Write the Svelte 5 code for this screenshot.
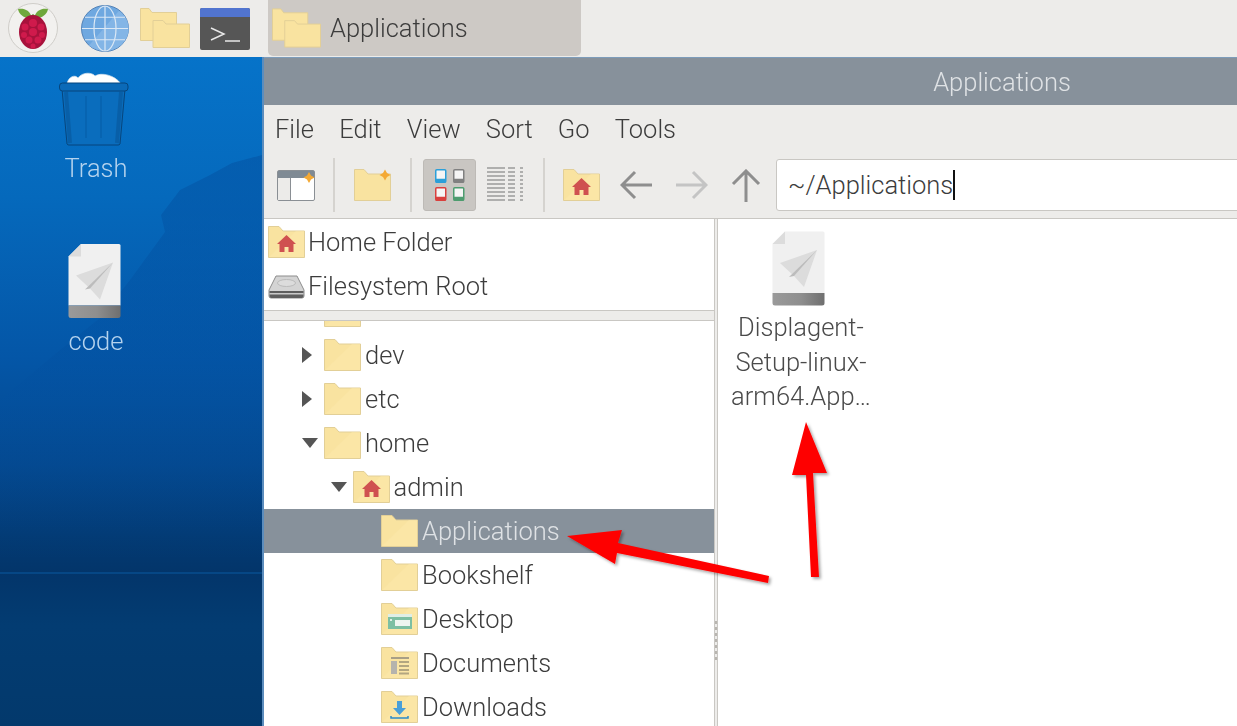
<script>
    const menus = ["File", "Edit", "View", "Sort", "Go", "Tools"];

    const tree = [
        {name: "dev", depth: 0, open: false},
        {name: "etc", depth: 0, open: false},
        {name: "home", depth: 0, open: true},
        {name: "admin", depth: 1, open: true, kind: "home"},
        {name: "Applications", depth: 2, selected: true},
        {name: "Bookshelf", depth: 2},
        {name: "Desktop", depth: 2, kind: "desktop"},
        {name: "Documents", depth: 2, kind: "documents"},
        {name: "Downloads", depth: 2, kind: "downloads"},
    ];

    const tiles = [
        {x: .75, y: .75, color: "#2b9fd9"},
        {x: 18.75, y: .75, color: "#808080"},
        {x: .75, y: 18.75, color: "#d9403e"},
        {x: 18.75, y: 18.75, color: "#4d9c6f"},
    ];
</script>

{#snippet folder(kind)}
    <svg class="folder" width="37" height="32" viewBox="0 0 37 32">
        <path d="M.5 .5H11L15 5H36.5V31.5H.5Z" fill="#f9e3a0" stroke="#e2cf97"/>
        <path d="M1 31L28 5H36V31Z" fill="#fbe7aa" opacity=".6"/>
        {#if kind === "home"}
            <path d="M18.500 9L28 18H25.500V26H20.500V21H16.500V26H11.500V18H9Z" fill="#cf5150"/>
        {:else if kind === "desktop"}
            <rect x="7" y="11" width="24" height="15" fill="#7dbfa3"/>
            <rect x="7" y="11" width="24" height="3" fill="#dfeee6"/>
            <rect x="14" y="17" width="15" height="6" fill="#eef5f0"/>
            <rect x="9" y="16" width="2" height="2" fill="#dfeee6"/>
        {:else if kind === "documents"}
            <rect x="10" y="10" width="18" height="2" fill="#a89f86"/>
            <rect x="10" y="14" width="6" height="13" fill="#b5b3ad"/>
            <path d="M18 15h10M18 19h10M18 23h10M18 26.500h10" stroke="#b3a680" stroke-width="2"/>
        {:else if kind === "downloads"}
            <path d="M16 10h5v7h4l-6.500 7L12 17h4Z" fill="#4a9fd8"/>
            <path d="M10 25v2h17v-2" fill="none" stroke="#2d8bc9" stroke-width="1.500"/>
        {/if}
    </svg>
{/snippet}

{#snippet twoFolders(w, h)}
    <svg width={w} height={h} viewBox="0 0 50 40">
        <path d="M.5 .5H9L12 4.500H36.500V32.500H.5Z" fill="#f9e3a0" stroke="#e2cf97"/>
        <path d="M13 12.500H23L26 16H49.500V39.500H13Z" fill="#f9e3a0" stroke="#e2cf97"/>
    </svg>
{/snippet}

{#snippet fileIcon(w, h)}
    <svg width={w} height={h} viewBox="0 0 53 75">
        <defs>
            <linearGradient id="band">
                <stop offset="0" stop-color="#9a9a9a"/>
                <stop offset=".55" stop-color="#8e8e8e"/>
                <stop offset="1" stop-color="#6f6f6f"/>
            </linearGradient>
        </defs>
        <path d="M13 .5H51a1.500 1.500 0 0 1 1.500 1.500V62H.5V13Z" fill="#f0f0f0"/>
        <path d="M13 .5V13H.5Z" fill="#dcdcdc"/>
        <path d="M.5 62H52.500V72a2.500 2.500 0 0 1-2.500 2.500H3A2.500 2.500 0 0 1 .5 72Z" fill="url(#band)"/>
        <path d="M8 32L45 19L32 56L22 45Z" fill="#dcdcdc"/>
        <path d="M45 19L17 46L22 45Z" fill="#bcbcbc"/>
    </svg>
{/snippet}

<div class="screen">
    <header class="panel">
        <svg class="launcher" width="50" height="50" viewBox="0 0 50 50">
            <circle cx="25" cy="25" r="24.500" fill="#f2f1ef" stroke="#cfcdc9"/>
            <path d="M24 15C17 16 11 12 10 6c6-1 12 1 14 9ZM26 15c7 1 13-3 14-9-6-1-12 1-14 9Z" fill="#6fa83c"/>
            <path d="M25 11l-5 4h10Z" fill="#5b8f30"/>
            <ellipse cx="25" cy="29" rx="14" ry="17" fill="#a8123c"/>
            <g fill="#d01a4c">
                <circle cx="25" cy="20" r="4"/><circle cx="17" cy="24" r="3.500"/><circle cx="33" cy="24" r="3.500"/>
                <circle cx="25" cy="29" r="4"/><circle cx="16" cy="32" r="3"/><circle cx="34" cy="32" r="3"/>
                <circle cx="21" cy="37" r="3.500"/><circle cx="30" cy="37" r="3.500"/><circle cx="25" cy="43" r="2.500"/>
            </g>
        </svg>
        <svg class="globe" width="48" height="47" viewBox="0 0 48 50" preserveAspectRatio="none">
            <ellipse cx="24" cy="25" rx="23.500" ry="24.500" fill="#6fa8e0" stroke="#4f7fb5"/>
            <path d="M8 43L38 6A24 24 0 0 1 44 38A24 24 0 0 1 8 43Z" fill="#83b5e6"/>
            <g fill="none" stroke="#dbe8f5" stroke-width="1.200">
                <path d="M24 1V49M1 25H47M4 13H44M4 37H44"/>
                <ellipse cx="24" cy="25" rx="11" ry="24"/>
            </g>
        </svg>
        <span class="launcher-folder">{@render twoFolders(50, 40)}</span>
        <svg class="term" width="50" height="42" viewBox="0 0 50 42">
            <rect width="50" height="42" rx="2" fill="#565656"/>
            <path d="M2 0H48a2 2 0 0 1 2 2V9H0V2A2 2 0 0 1 2 0Z" fill="#5174cf"/>
            <path d="M11 20L24 26L11 32" fill="none" stroke="#e8e8e8" stroke-width="1.500"/>
            <path d="M25 33H40" stroke="#e8e8e8" stroke-width="1.500"/>
        </svg>
        <div class="task">
            {@render twoFolders(49, 40)}
            <span>Applications</span>
        </div>
    </header>

    <div class="below">
        <aside class="desktop">
            <svg class="hills" viewBox="0 57 262 669" preserveAspectRatio="none">
                <defs>
                    <linearGradient id="hill" x1="0" y1="0" x2="0" y2="1">
                        <stop offset="0" stop-color="#0350a0" stop-opacity=".5"/>
                        <stop offset=".5" stop-color="#0350a0" stop-opacity=".35"/>
                        <stop offset="1" stop-color="#0350a0" stop-opacity="0"/>
                    </linearGradient>
                </defs>
                <path d="M262 155L232 163L210 175L180 190L161 215L165 232L130 280L100 318L60 350L0 400V560H262Z" fill="url(#hill)"/>
                <rect x="0" y="572" width="262" height="2" fill="#0a5aa0" opacity=".5"/>
            </svg>
            <div class="shortcut trash">
                <svg width="70" height="74" viewBox="0 0 70 74">
                    <path d="M8 12C9 5 16 2 19 6C23 0 33 0 36 4C42 0 56 3 62 12Z" fill="#fff" stroke="#d8e4ee" stroke-width=".7"/>
                    <path d="M3 17H66L61 72a2 2 0 0 1-2 1H10a2 2 0 0 1-2-1Z" fill="#0a6dbd" stroke="#07457c"/>
                    <path d="M7 20L11 71M62 20L58 71" stroke="#07508f" stroke-width="4" opacity=".45"/>
                    <path d="M27 24V66M42 24V66" stroke="#0761ad" stroke-width="1.500"/>
                    <rect x=".5" y="11" width="68.500" height="8" rx="3" fill="#0b6ab8" stroke="#07457c"/>
                </svg>
                <span>Trash</span>
            </div>
            <div class="shortcut code">
                {@render fileIcon(53, 76)}
                <span>code</span>
            </div>
        </aside>

        <main class="window">
            <div class="titlebar">Applications</div>
            <nav class="menubar">
                {#each menus as m}<span>{m}</span>{/each}
            </nav>
            <div class="toolbar">
                <svg class="tool-window" width="39" height="31" viewBox="0 0 39 31">
                    <rect x=".5" y=".5" width="37" height="30" rx="1.500" fill="#fff" stroke="#8a8f94"/>
                    <rect x="1" y="1" width="36" height="7" fill="#7f8a94"/>
                    <rect x="1" y="8" width="12" height="22" fill="#ecebe9"/>
                    <path d="M13.500 8V30" stroke="#8a8f94"/>
                    <path d="M32 2l2 3.500 3.500 2-3.500 2-2 3.500-2-3.500-3.500-2 3.500-2Z" fill="#f4a934"/>
                </svg>
                <i class="sep"></i>
                <svg class="tool-new" width="38" height="32" viewBox="0 0 38 32">
                    <path d="M.5 .5H10L14 5H36.500V31.500H.5Z" fill="#f9e3a0" stroke="#e2cf97"/>
                    <path d="M31 .5l2 3.500 3.500 2-3.500 2-2 3.500-2-3.500-3.500-2 3.500-2Z" fill="#f4a934"/>
                </svg>
                <i class="sep"></i>
                <button class="view-btn" aria-label="Icon view">
                    <svg width="30" height="32" viewBox="0 0 30 32">
                        {#each tiles as t}
                            <rect x={t.x} y={t.y} width="10" height="12.500" rx="1" fill="#f5f5f5" stroke={t.color} stroke-width="1.500"/>
                            <rect x={t.x} y={t.y + 9} width="10" height="4" fill={t.color}/>
                        {/each}
                    </svg>
                </button>
                <svg class="tool-list" width="36" height="36" viewBox="0 0 36 36">
                    <g stroke="#9a9a9a" stroke-width="1.400">
                        {#each [1, 5, 9, 13, 17, 21, 25, 29, 33] as y}
                            <path d="M0 {y}H18M21 {y}H28M33 {y}H36"/>
                        {/each}
                    </g>
                </svg>
                <i class="sep"></i>
                <span class="tool-home">{@render folder("home")}</span>
                <svg class="arrow-back" width="33" height="30" viewBox="0 0 33 30">
                    <path d="M32 15H3M15 2L2 15L15 28" fill="none" stroke="#8e8e8e" stroke-width="3"/>
                </svg>
                <svg class="arrow-fwd" width="33" height="30" viewBox="0 0 33 30">
                    <path d="M1 15H30M18 2L31 15L18 28" fill="none" stroke="#c4c4c4" stroke-width="3"/>
                </svg>
                <svg class="arrow-up" width="30" height="33" viewBox="0 0 30 33">
                    <path d="M15 33V3M2 15L15 2L28 15" fill="none" stroke="#8e8e8e" stroke-width="3"/>
                </svg>
                <div class="address"><span>~/Applications</span><i class="caret"></i></div>
            </div>

            <div class="panes">
                <div class="side">
                    <div class="places">
                        <div class="place">{@render folder("home")}<span>Home Folder</span></div>
                        <div class="place">
                            <svg width="37" height="32" viewBox="0 0 37 32">
                                <path d="M8 6H29L36 20V26a2 2 0 0 1-2 2H3a2 2 0 0 1-2-2V20Z" fill="#d4d4d4" stroke="#8c8c8c"/>
                                <path d="M1.500 21H35.500V26a2 2 0 0 1-2 2H3.500a2 2 0 0 1-2-2Z" fill="#5e5e5e"/>
                                <rect x="1.500" y="23" width="34" height="1.500" fill="#c9c9c9"/>
                                <ellipse cx="18.500" cy="13" rx="9" ry="3.500" fill="#dcdcdc" stroke="#bbb"/>
                            </svg>
                            <span>Filesystem Root</span>
                        </div>
                    </div>
                    <div class="tree">
                        <div class="row cut" style="padding-left: 60px">{@render folder()}</div>
                        {#each tree as item}
                            <div class="row" class:selected={item.selected} style="padding-left: {38 + item.depth * 28.5}px">
                                <span class="expander">
                                    {#if item.open === false}
                                        <svg width="10" height="16" viewBox="0 0 10 16"><path d="M0 0L10 8L0 16Z" fill="#555"/></svg>
                                    {:else if item.open}
                                        <svg width="16" height="10" viewBox="0 0 16 10"><path d="M0 0H16L8 10Z" fill="#555"/></svg>
                                    {/if}
                                </span>
                                {@render folder(item.kind)}
                                <span class="label">{item.name}</span>
                            </div>
                        {/each}
                    </div>
                </div>
                <div class="splitter"><i></i></div>
                <div class="files">
                    <div class="file">
                        <span class="file-icon">{@render fileIcon(53, 75)}</span>
                        <div class="file-name">Displagent-<br>Setup-linux-<br>arm64.App…</div>
                    </div>
                </div>
            </div>
        </main>
    </div>

    <svg class="callouts" width="1237" height="726" viewBox="0 0 1237 726">
        <defs>
            <filter id="shade" x="-20%" y="-20%" width="140%" height="140%">
                <feDropShadow dx="2" dy="2" stdDeviation="1.500" flood-color="#000" flood-opacity=".35"/>
            </filter>
        </defs>
        <g fill="#fe0000" filter="url(#shade)">
            <path d="M567 536L622 530L618 543L769 576L768 583L617 553L615 564Z"/>
            <path d="M806 422L827 473L813 473L819 577L811 577L806 475L792 475Z"/>
        </g>
    </svg>
</div>

<style>
    :global(body) {
        overflow: hidden;
        background: #edecea;
    }

    .screen {
        position: relative;
        width: 1237px;
        height: 726px;
        overflow: hidden;
        display: flex;
        flex-direction: column;
        font-family: Roboto, "Liberation Sans", sans-serif;
        font-weight: 300;
        font-size: 25.5px;
        color: #3c3c3c;
        /* the reference is an upscaled capture, everything in it is a bit soft */
        filter: blur(.45px);
    }

    .panel {
        flex: none;
        height: 57px;
        box-sizing: border-box;
        padding-bottom: 1px;
        background: #edecea;
        display: flex;
        align-items: center;
    }

    .panel svg {
        display: block;
    }

    .launcher { margin-left: 8px; }
    .globe { margin-left: 23px; }
    .launcher-folder { margin-left: 11px; }
    .term { margin: 2px 0 0 10px; }

    .task {
        margin-left: 18px;
        width: 313px;
        height: 56px;
        box-sizing: border-box;
        padding: 0 0 0 4px;
        background: #cdc9c5;
        border-radius: 0 0 5px 5px;
        display: flex;
        align-items: center;
        gap: 9px;
    }

    .below {
        flex: 1;
        display: flex;
        min-height: 0;
    }

    .desktop {
        flex: none;
        width: 262px;
        position: relative;
        overflow: hidden;
        background: linear-gradient(180deg, #0673c9 0%, #0569bc 21%, #0456a7 45%, #04488e 61%, #033a73 72%, #03356a 77%, #033c72 85%, #03396c 100%);
    }

    .hills {
        position: absolute;
        inset: 0;
        width: 100%;
        height: 100%;
    }

    .shortcut {
        position: absolute;
        left: 0;
        width: 192px;
        display: flex;
        flex-direction: column;
        align-items: center;
        color: #b5d3ee;
    }

    .shortcut svg { margin-left: -4px; }
    .trash { top: 15px; gap: 7px; }
    .code { top: 186px; gap: 7px; }

    .window {
        flex: none;
        width: 1482px;
        box-sizing: border-box;
        border-left: 2px solid #5c8dbd;
        background: #edecea;
        display: flex;
        flex-direction: column;
    }

    .titlebar {
        flex: none;
        height: 48px;
        box-sizing: border-box;
        padding-right: 4px;
        border-top: 1px solid #7d9cba;
        background: #87919b;
        color: #dfe2e5;
        display: flex;
        align-items: center;
        justify-content: center;
    }

    .menubar {
        flex: none;
        height: 45px;
        box-sizing: border-box;
        padding: 3px 0 0 11px;
        display: flex;
        align-items: center;
        gap: 25.2px;
    }

    .toolbar {
        flex: none;
        height: 69px;
        box-sizing: border-box;
        padding: 2px 0 0 13px;
        border-bottom: 1px solid #c9c7c3;
        display: flex;
        align-items: center;
    }

    .tool-window { margin-right: -2px; }
    .tool-new { margin-right: -1px; }

    .sep {
        width: 2px;
        height: 54px;
        margin: 0 19px;
        background: #d5d3cf;
    }

    .view-btn {
        width: 53px;
        height: 52px;
        margin: 0 11px 0 -8px;
        padding: 0;
        border: 1px solid #bdbab6;
        border-radius: 3px;
        background: #c9c6c2;
        display: flex;
        align-items: center;
        justify-content: center;
    }

    .tool-list { margin-right: 1px; }
    .tool-home { display: block; height: 32px; margin-left: -1px; }
    .arrow-back { margin-left: 20px; }
    .arrow-fwd { margin-left: 22px; }
    .arrow-up { margin-left: 23px; }

    .address {
        flex: 1;
        height: 52px;
        margin-left: 15px;
        padding-left: 11px;
        box-sizing: border-box;
        background: #fff;
        border: 1px solid #c9c7c3;
        border-radius: 3px;
        display: flex;
        align-items: center;
    }

    .caret {
        width: 2px;
        height: 30px;
        background: #111;
    }

    .panes {
        flex: 1;
        display: flex;
        min-height: 0;
    }

    .side {
        flex: none;
        width: 450px;
        display: flex;
        flex-direction: column;
    }

    .places {
        flex: none;
        height: 92px;
        box-sizing: border-box;
        background: #fff;
        border-bottom: 1px solid #c9c7c3;
        padding: 1px 0 0 4px;
    }

    .place {
        height: 44px;
        display: flex;
        align-items: center;
        gap: 3px;
    }

    .tree {
        flex: 1;
        margin-top: 9px;
        border-top: 1px solid #c9c7c3;
        background: #fff;
        overflow: hidden;
    }

    .row {
        height: 44px;
        display: flex;
        align-items: center;
    }

    .cut {
        margin-top: -32px;
    }

    .expander {
        width: 22px;
        display: flex;
    }

    .label {
        margin-left: 4px;
    }

    .selected {
        background: #87919b;
        color: #dfe2e5;
    }

    .splitter {
        flex: none;
        width: 4px;
        box-sizing: border-box;
        border-left: 1px solid #c9c7c3;
        border-right: 1px solid #c9c7c3;
        background: #edecea;
        position: relative;
    }

    .splitter i {
        position: absolute;
        left: 0;
        top: 402px;
        width: 2px;
        height: 40px;
        background: repeating-linear-gradient(180deg, #b8b5b0 0 3px, transparent 3px 6px);
    }

    .files {
        flex: 1;
        background: #fff;
        padding: 12px 0 0 0;
    }

    .file {
        width: 166px;
        display: flex;
        flex-direction: column;
        align-items: center;
    }

    .file-icon {
        display: block;
        height: 75px;
        margin-right: 5px;
    }

    .file-name {
        margin-top: 4px;
        text-align: center;
        line-height: 34.5px;
        color: #4a4a4a;
    }

    .callouts {
        position: absolute;
        inset: 0;
        pointer-events: none;
    }
</style>
